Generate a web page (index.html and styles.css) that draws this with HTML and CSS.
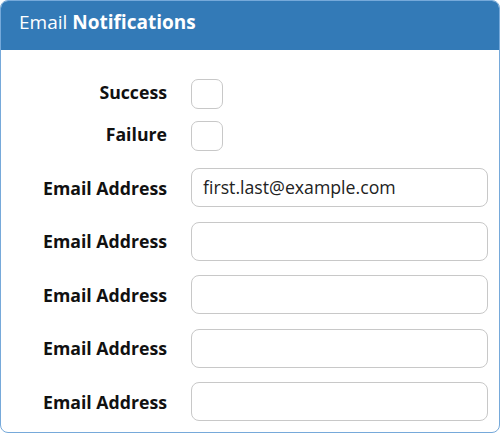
FILE: index.html
```html
<!DOCTYPE html>
<html>
<head>
<meta charset="utf-8">
<link rel="stylesheet" href="styles.css">
</head>
<body>
<div class="panel">
  <div class="panel-heading">Email <b>Notifications</b></div>
  <div class="panel-body">
    <div class="row check-row">
      <label class="lbl">Success</label>
      <span class="checkbox"></span>
    </div>
    <div class="row check-row last-check">
      <label class="lbl">Failure</label>
      <span class="checkbox"></span>
    </div>
    <div class="row input-row">
      <label class="lbl">Email Address</label>
      <div class="input">first.last@example.com</div>
    </div>
    <div class="row input-row">
      <label class="lbl">Email Address</label>
      <div class="input"></div>
    </div>
    <div class="row input-row">
      <label class="lbl">Email Address</label>
      <div class="input"></div>
    </div>
    <div class="row input-row">
      <label class="lbl">Email Address</label>
      <div class="input"></div>
    </div>
    <div class="row input-row">
      <label class="lbl">Email Address</label>
      <div class="input"></div>
    </div>
  </div>
</div>
</body>
</html>
```
FILE: styles.css
```css
html, body {
  margin: 0;
  padding: 0;
  background: #fff;
}
body {
  font-family: "Open Sans", "Liberation Sans", sans-serif;
  color: #111;
}
.panel {
  width: 500px;
  height: 433px;
  box-sizing: border-box;
  border: 1px solid #76a9da;
  border-radius: 8px;
  overflow: hidden;
}
.panel-heading {
  background: #337ab7;
  color: #fff;
  height: 50px;
  box-sizing: border-box;
  padding: 10px 19px 0;
  font-size: 19px;
  line-height: 25px;
  margin: -1px -1px 0;
}
.panel-heading b {
  font-weight: 700;
}
.panel-body {
  padding: 29px 11px 0 0;
  display: flex;
  flex-direction: column;
}
.row {
  display: grid;
  grid-template-columns: 166px 1fr;
  column-gap: 24px;
  align-items: center;
}
.lbl {
  text-align: right;
  font-weight: 700;
  font-size: 17.7px;
  line-height: 24px;
  color: #111;
}
.check-row {
  height: 30px;
  margin-bottom: 12px;
}
.check-row .lbl {
  margin-top: -4px;
}
.check-row.last-check {
  margin-bottom: 17px;
}
.checkbox {
  display: block;
  width: 32px;
  height: 30px;
  box-sizing: border-box;
  border: 1px solid #c8c8c8;
  border-radius: 7px;
}
.input-row {
  height: 39px;
  margin-bottom: 14.5px;
}
.input {
  height: 39px;
  box-sizing: border-box;
  border: 1px solid #c8c8c8;
  border-radius: 8px;
  padding: 0 11px;
  font-size: 17.7px;
  line-height: 37px;
  color: #222;
}
```
